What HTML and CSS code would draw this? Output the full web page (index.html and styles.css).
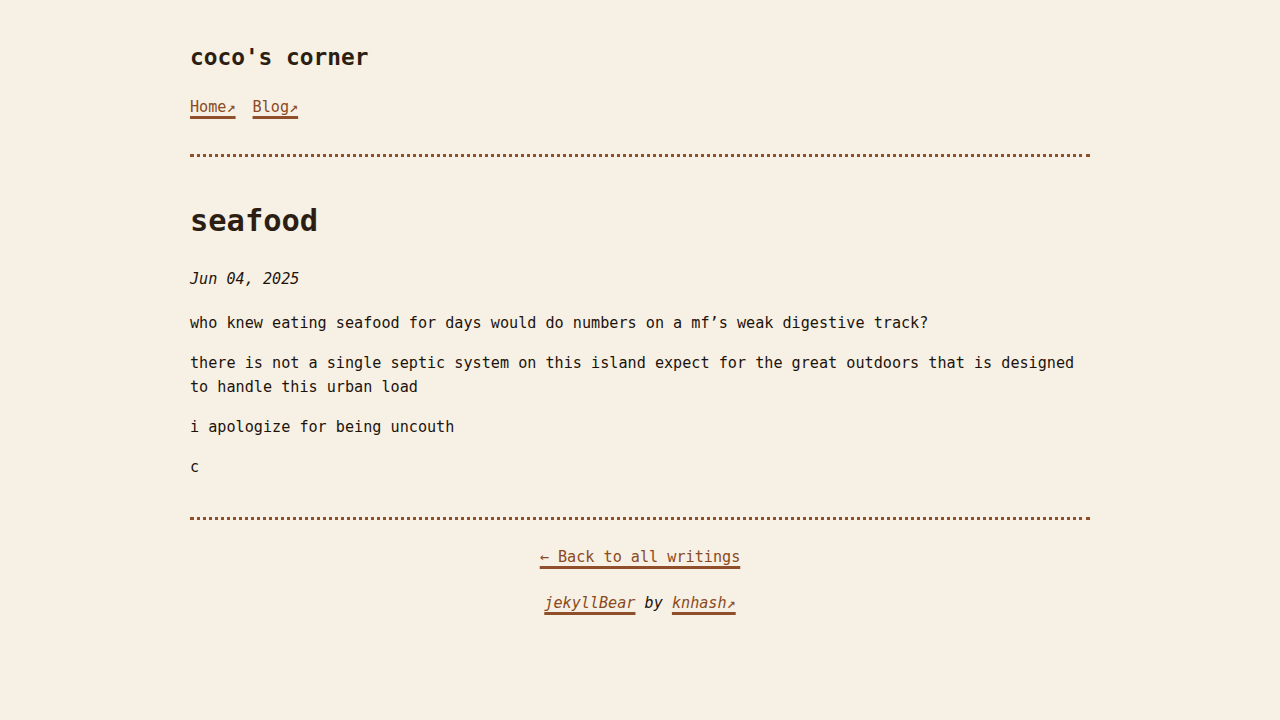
FILE: index.html
```html
<!DOCTYPE html>
<html lang="en">
<head>
<meta charset="utf-8">
<title>seafood | coco's corner</title>
<link rel="stylesheet" href="styles.css">
</head>
<body>
<div class="page">
  <header class="site-header">
    <div class="site-title">coco's corner</div>
    <nav class="site-nav">
      <a href="#" class="link">Home↗</a>
      <a href="#" class="link">Blog↗</a>
    </nav>
  </header>
  <main class="post">
    <h1 class="post-title">seafood</h1>
    <p class="post-date">Jun 04, 2025</p>
    <p>who knew eating seafood for days would do numbers on a mf’s weak digestive track?</p>
    <p>there is not a single septic system on this island expect for the great outdoors that is designed to handle this urban load</p>
    <p>i apologize for being uncouth</p>
    <p>c</p>
  </main>
  <footer class="site-footer">
    <div class="back"><a href="#" class="link">← Back to all writings</a></div>
    <div class="credit"><a href="#" class="link">jekyllBear</a> by <a href="#" class="link">knhash↗</a></div>
  </footer>
</div>
</body>
</html>
```
FILE: styles.css
```css
html, body {
  margin: 0;
  padding: 0;
  background: #f7f0e4;
}
body {
  font-family: "DejaVu Sans Mono", "Liberation Mono", monospace;
  font-size: 15.15px;
  line-height: 24px;
  color: #1c140c;
}
.page {
  max-width: 900px;
  margin: 0 auto;
  padding-top: 43px;
}
.site-header {
  border-bottom: 3px dotted #8f4f2a;
  padding-bottom: 35px;
}
.site-title {
  font-size: 22.8px;
  line-height: 28px;
  font-weight: bold;
  color: #2c1e12;
}
.site-nav {
  margin-top: 24px;
  display: flex;
  gap: 17px;
}
.link {
  color: #8a4a22;
  text-decoration: underline;
  text-decoration-color: #8f4f2a;
  text-decoration-thickness: 3px;
  text-underline-offset: 4px;
  text-decoration-skip-ink: none;
}
.post {
  padding-top: 46px;
  padding-bottom: 38px;
  border-bottom: 3px dotted #8f4f2a;
}
.post-title {
  font-size: 30.4px;
  line-height: 36px;
  font-weight: bold;
  color: #2c1e12;
  margin: 0 0 28px;
}
.post p {
  margin: 0 0 16px;
}
.post p:last-child {
  margin-bottom: 0;
}
.post .post-date {
  font-style: italic;
  margin-bottom: 20px;
}
.site-footer {
  text-align: center;
  padding-top: 25px;
}
.credit {
  margin-top: 22px;
  font-style: italic;
}
```
